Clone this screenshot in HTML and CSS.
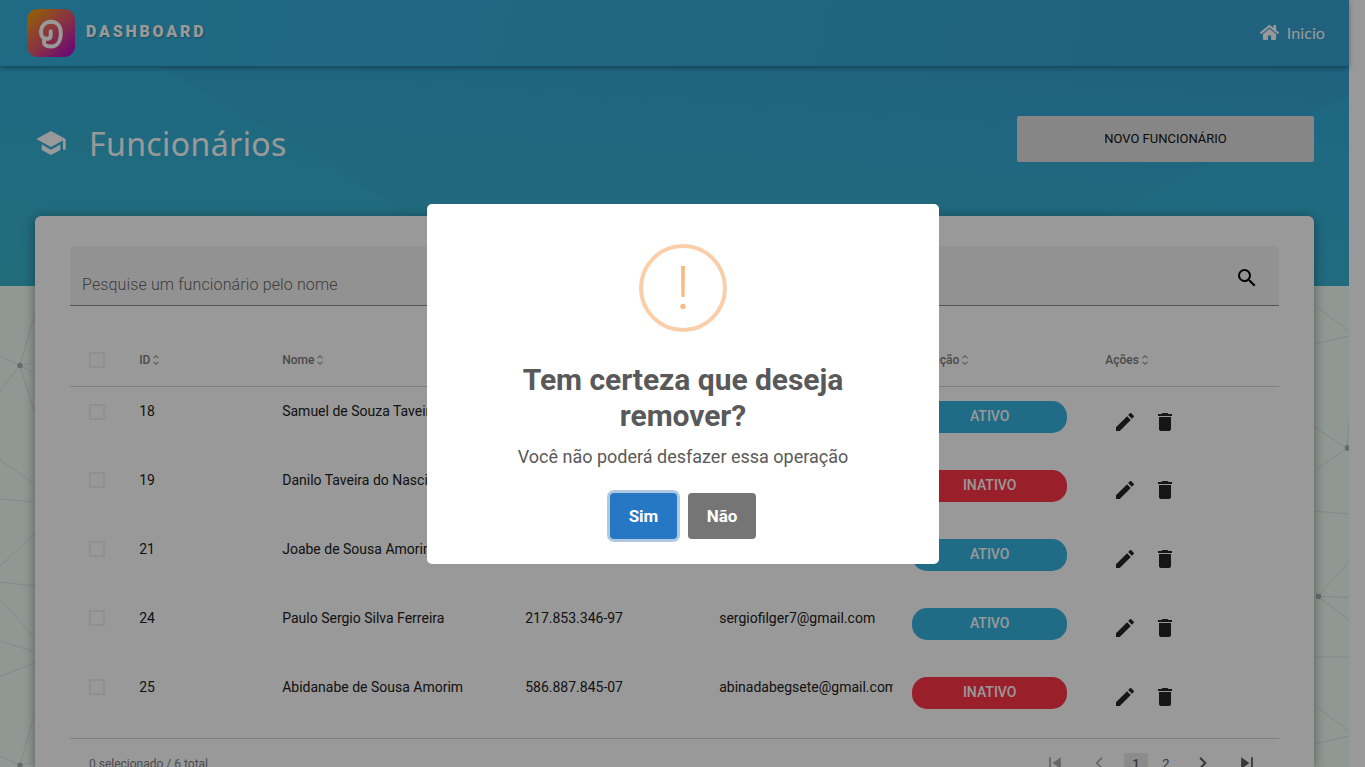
FILE: index.html
```
<!DOCTYPE html>
<html lang="pt-BR">
<head>
<meta charset="utf-8">
<title>Funcionários</title>
<link rel="stylesheet" href="styles.css">
</head>
<body>
<svg class="defs" width="0" height="0">
  <symbol id="sort" viewBox="0 0 8 12"><path d="M1.5 4.2 4 1.8l2.500 2.400M1.500 7.800 4 10.200l2.500-2.400" fill="none" stroke="currentColor" stroke-width="1.100"/></symbol>
  <symbol id="edit" viewBox="0 0 24 24"><path d="M3 17.250V21h3.750L17.810 9.940l-3.750-3.750L3 17.250zM20.710 7.040a1 1 0 0 0 0-1.410l-2.340-2.340a1 1 0 0 0-1.410 0l-1.830 1.830 3.750 3.750 1.830-1.830z"/></symbol>
  <symbol id="trash" viewBox="0 0 24 24"><path d="M6 19c0 1.100.9 2 2 2h8c1.100 0 2-.9 2-2V7H6v12zM19 4h-3.500l-1-1h-5l-1 1H5v2h14V4z"/></symbol>
</svg>
<div class="page">
  <svg class="network" viewBox="0 0 1349 481" width="1349" height="481">
    <g class="lines">
      <path d="M0 70 20 79.500 35 27M20 79.500 35 77M20 79.500 35 88M20 79.500 35 127M20 79.500 0 105M0 174 35 198M0 213l35 3M35 247 0 280M0 296l35 4M0 313l35 39M0 355l35 11M0 390l35-13M0 470l20 9 15-52M20 479l15-3"/>
      <path d="M1314 19l35 26M1314 58l35-8M1314 141l33 21-33 23M1347 162l2-28M1314 225l35 3M1314 304l4 6.500 31-35M1318 310.500l31 1M1318 310.500l31 23M1314 371h35M1314 419l35 26M1314 458l35-8"/>
    </g>
    <circle cx="20" cy="79.500" r="2.700"/><circle cx="20" cy="479.500" r="2.700"/><circle cx="1347.500" cy="162" r="2.700"/><circle cx="1318.500" cy="310.500" r="2.700"/>
  </svg>
  <div class="hero">
    <svg class="facets" viewBox="0 0 1349 286" preserveAspectRatio="none">
      <path class="light" d="M0 0H40L320 158 430 230V286H0z"/>
      <path class="light" d="M1349 95 1210 162 1105 216 1050 250V286H1349z"/>
    </svg>
  </div>
  <header class="topbar">
    <div class="brand">
      <svg class="logo" viewBox="0 0 48 48" width="48" height="48">
        <defs><linearGradient id="lg" x1="0" y1="0" x2="1" y2="1"><stop offset="0" stop-color="#f5a800"/><stop offset=".5" stop-color="#e6586c"/><stop offset="1" stop-color="#aa00d2"/></linearGradient></defs>
        <rect width="48" height="48" rx="11" fill="url(#lg)"/>
        <path d="M23.700 22.300V26q0 3.800-3.500 3.800C16.200 29.800 14 27 14 23.200c0-6 4-10.400 10-10.400 6.500 0 9.800 4.900 9.800 11.400 0 8-3.600 13.300-9.700 13.300-4.400 0-7.100-1.500-7.100-4.200v-4" fill="none" stroke="#fff" stroke-width="3.900" stroke-linecap="round" stroke-linejoin="round"/>
      </svg>
      <span class="brand-name">DASHBOARD</span>
    </div>
    <a class="home"><svg viewBox="0 0 576 512" width="19" height="17"><path fill="#fff" d="M488 312.700V456c0 13.300-10.700 24-24 24H348c-6.600 0-12-5.400-12-12V356c0-6.600-5.400-12-12-12h-72c-6.600 0-12 5.400-12 12v112c0 6.600-5.400 12-12 12H112c-13.300 0-24-10.700-24-24V312.700c0-3.600 1.600-7 4.400-9.300l188-154.800c4.400-3.600 10.800-3.600 15.300 0l188 154.800c2.700 2.300 4.300 5.700 4.300 9.300zm83.600-60.900L488 182.900V44.400c0-6.600-5.400-12-12-12h-56c-6.600 0-12 5.400-12 12V117l-89.500-73.700c-17.700-14.600-43.300-14.600-61 0L4.400 251.800c-5.100 4.200-5.800 11.800-1.600 16.900l25.500 31c4.200 5.100 11.800 5.800 16.900 1.600l235.200-193.700c4.400-3.600 10.800-3.600 15.300 0l235.200 193.700c5.100 4.200 12.700 3.500 16.900-1.600l25.500-31c4.200-5.200 3.400-12.700-1.700-16.900z"/></svg><span>Inicio</span></a>
  </header>
  <main class="content">
    <div class="title-row">
      <h1><svg viewBox="0 0 24 24" width="32" height="32"><path fill="#fff" d="M5 13.180v4L12 21l7-3.820v-4L12 17l-7-3.820zM12 3 1 9l11 6 9-4.910V17h2V9L12 3z"/></svg><span>Funcionários</span></h1>
      <button class="new">NOVO FUNCIONÁRIO</button>
    </div>
    <section class="card">
      <div class="search"><span>Pesquise um funcionário pelo nome</span><svg viewBox="0 0 24 24" width="24" height="24"><path d="M15.500 14h-.79l-.28-.27A6.470 6.470 0 0 0 16 9.500 6.500 6.500 0 1 0 9.500 16c1.610 0 3.090-.59 4.230-1.570l.27.28v.79l5 4.990L20.490 19l-4.990-5zm-6 0a4.500 4.500 0 1 1 0-9 4.500 4.500 0 0 1 0 9z"/></svg></div>
      <div class="row head">
        <div class="cell"><i class="check"></i></div>
        <div class="cell">ID<svg class="sort"><use href="#sort"/></svg></div>
        <div class="cell">Nome<svg class="sort"><use href="#sort"/></svg></div>
        <div class="cell"></div>
        <div class="cell"></div>
        <div class="cell">Situação<svg class="sort"><use href="#sort"/></svg></div>
        <div class="cell">Ações<svg class="sort"><use href="#sort"/></svg></div>
      </div>
      <div class="rows">
        <div class="row first"><div class="cell"><i class="check"></i></div><div class="cell">18</div><div class="cell">Samuel de Souza Taveira</div><div class="cell"></div><div class="cell"></div><div class="cell"><b class="badge on">ATIVO</b></div><div class="cell acts"><svg><use href="#edit"/></svg><svg><use href="#trash"/></svg></div></div>
        <div class="row"><div class="cell"><i class="check"></i></div><div class="cell">19</div><div class="cell">Danilo Taveira do Nascimento</div><div class="cell"></div><div class="cell"></div><div class="cell"><b class="badge off">INATIVO</b></div><div class="cell acts"><svg><use href="#edit"/></svg><svg><use href="#trash"/></svg></div></div>
        <div class="row"><div class="cell"><i class="check"></i></div><div class="cell">21</div><div class="cell">Joabe de Sousa Amorim</div><div class="cell"></div><div class="cell"></div><div class="cell"><b class="badge on">ATIVO</b></div><div class="cell acts"><svg><use href="#edit"/></svg><svg><use href="#trash"/></svg></div></div>
        <div class="row"><div class="cell"><i class="check"></i></div><div class="cell">24</div><div class="cell">Paulo Sergio Silva Ferreira</div><div class="cell">217.853.346-97</div><div class="cell">sergiofilger7@gmail.com</div><div class="cell"><b class="badge on">ATIVO</b></div><div class="cell acts"><svg><use href="#edit"/></svg><svg><use href="#trash"/></svg></div></div>
        <div class="row"><div class="cell"><i class="check"></i></div><div class="cell">25</div><div class="cell">Abidanabe de Sousa Amorim</div><div class="cell">586.887.845-07</div><div class="cell">abinadabegsete@gmail.com</div><div class="cell"><b class="badge off">INATIVO</b></div><div class="cell acts"><svg><use href="#edit"/></svg><svg><use href="#trash"/></svg></div></div>
      </div>
      <div class="footer">
        <span class="count">0 selecionado / 6 total</span>
        <div class="pager">
          <svg class="dim" viewBox="0 0 12 12"><path d="M1 1h1.500v10H1zM11 1v10L4 6z"/></svg>
          <svg class="dim" viewBox="0 0 12 12"><path d="M8.500 1.500 4 6l4.500 4.500" fill="none" stroke="currentColor" stroke-width="1.500"/></svg>
          <span class="num current">1</span><span class="num">2</span>
          <svg viewBox="0 0 12 12"><path d="M3.500 1.500 8 6l-4.500 4.500" fill="none" stroke="currentColor" stroke-width="1.700"/></svg>
          <svg viewBox="0 0 12 12"><path d="M9.500 1H11v10H9.500zM1 1v10l7-5z"/></svg>
        </div>
      </div>
    </section>
  </main>
</div>
<div class="overlay">
  <div class="modal">
    <div class="warn"><svg viewBox="0 0 10 50" width="10" height="50"><path d="M3 3h4l-.4 31H3.400z"/><circle cx="5" cy="43.500" r="2.700"/></svg></div>
    <h2>Tem certeza que deseja remover?</h2>
    <p>Você não poderá desfazer essa operação</p>
    <div class="buttons"><button class="yes">Sim</button><button class="no">Não</button></div>
  </div>
</div>
</body>
</html>
```
FILE: styles.css
```
* { box-sizing: border-box; }
html, body { margin: 0; height: 100%; overflow: hidden; background: #fff; }
body { font-family: Roboto, "Liberation Sans", sans-serif; color: #212121; }
button { font-family: inherit; border: 0; }
.defs { position: absolute; }
.page { position: relative; width: 1349px; height: 767px; background: #eefdf5; }
.network { position: absolute; left: 0; top: 286px; }
.network .lines { fill: none; stroke: #dfdfee; stroke-width: 1; }
.network circle { fill: #aab2af; }
.hero { position: absolute; left: 0; top: 0; width: 1349px; height: 286px; background: linear-gradient(184deg, #359fd3 0%, #36abd5 45%, #39b2c8 100%); }
.facets { width: 100%; height: 100%; display: block; }
.facets .light { fill: #35c0e0; opacity: .25; }
.topbar { position: relative; height: 66px; display: flex; align-items: center; justify-content: space-between; padding: 0 24px 0 27px; box-shadow: 0 2px 5px rgba(0,0,0,.35); background: linear-gradient(100deg, #36b1dd, #36abd8 50%, #36a3d0); }
.brand { display: flex; align-items: center; gap: 11px; }
.brand-name { color: #fff; font-size: 16px; font-weight: 900; letter-spacing: 2.780px; padding-bottom: 4px; text-shadow: 1px 1px 2px rgba(0,0,0,.3); }
.home { display: flex; align-items: center; gap: 8px; color: #fff; font: 16px Lato, sans-serif; letter-spacing: .1px; padding-bottom: 2px; }
.content { position: relative; padding: 50px 35px 0; }
.title-row { display: flex; justify-content: space-between; height: 100px; }
h1 { margin: 0; display: flex; align-items: center; gap: 22px; height: 53px; color: #fff; font: 400 32px "Noto Sans", "Open Sans", sans-serif; letter-spacing: .4px; }
h1 span { padding-top: 1px; }
.new { width: 297px; height: 46px; border-radius: 2px; background: #dfdfdf; font-size: 13px; color: #111; padding: 0 0 2px; }
.card { height: 551px; overflow: hidden; background: #fff; border-radius: 6px 6px 0 0; padding: 30px 35px 0; box-shadow: 0 2px 12px rgba(0,0,0,.4); }
.search { height: 60px; display: flex; justify-content: space-between; background: #f4f4f4; border-bottom: 1px solid #8c8c8c; border-radius: 4px 4px 0 0; padding: 20px 20px 0 12px; }
.search span { font-size: 16px; line-height: 38px; font-weight: 300; color: #666; letter-spacing: .13px; }
.row { display: grid; grid-template-columns: 50px 143px 243px 194px 193px 193px 193px; height: 69px; font-size: 14px; line-height: 20px; }
.cell { padding: 14px 0 0 19.200px; overflow: hidden; white-space: nowrap; }
.head { height: 81px; border-bottom: 1px solid #d2d2d2; font-size: 12px; font-weight: 500; color: #7c7c7c; }
.head .cell { padding-top: 44px; }
.sort { width: 8px; height: 12px; margin-left: 2px; vertical-align: -2px; color: #999; }
.check { display: block; width: 16px; height: 16px; border: 2px solid #efefef; margin-top: 2px; }
.first .check { margin-top: 3px; }
.rows { height: 351px; }
.badge { display: block; width: 155px; height: 32px; border-radius: 15px; font-weight: 500; color: #fff; text-align: center; line-height: 30px; }
.on { background: #36b5e2; }
.off { background: #ff3448; }
.acts { display: flex; gap: 16px; padding: 22px 0 0 27px; }
.acts svg { width: 24px; height: 24px; fill: #262626; }
.first .acts { padding-top: 23px; }
.footer { height: 50px; border-top: 1px solid #d2d2d2; display: flex; justify-content: space-between; padding: 14px 24px 0 19px; }
.count { font-size: 12px; line-height: 22px; color: #808080; }
.pager { display: flex; align-items: center; height: 20px; color: #5c5c5c; font-size: 13px; }
.pager svg { width: 14px; height: 14px; margin-right: 30px; fill: currentColor; }
.pager svg:last-child { margin-right: 1px; }
.pager .dim { color: #aaa; }
.pager .dim + .dim { margin-right: 18px; }
.num { width: 24px; height: 20px; line-height: 21px; text-align: center; margin-right: 6px; }
.num + .num { margin-right: 18px; }
.current { background: #e8e8e8; border-radius: 3px; font-weight: 500; }
.overlay { position: absolute; inset: 0; width: 1365px; height: 767px; background: rgba(0,0,0,.4); display: flex; justify-content: center; align-items: flex-start; padding-top: 204px; }
.modal { width: 512px; height: 360px; margin-left: 1px; background: #fff; border-radius: 5px; padding: 40px 80px 0; text-align: center; color: #595959; }
.warn { width: 88px; height: 88px; margin: 0 auto 30px; border: 4px solid #facea8; border-radius: 50%; display: flex; justify-content: center; align-items: center; }
.warn svg { fill: #f8bb86; }
h2 { margin: 0 0 12px; font-size: 30px; line-height: 36px; font-weight: 700; letter-spacing: -.04px; }
.modal p { margin: 0; font-size: 18px; line-height: 22px; }
.buttons { display: flex; justify-content: center; gap: 11px; margin: 25px 0 0; }
.buttons button { width: 67px; height: 46px; border-radius: 4px; color: #fff; font-size: 17px; font-weight: 700; padding: 0; }
.yes { background: #2778c4; box-shadow: 0 0 0 3px #b0c9e3; }
.buttons .no { width: 68px; background: #757575; }
```
